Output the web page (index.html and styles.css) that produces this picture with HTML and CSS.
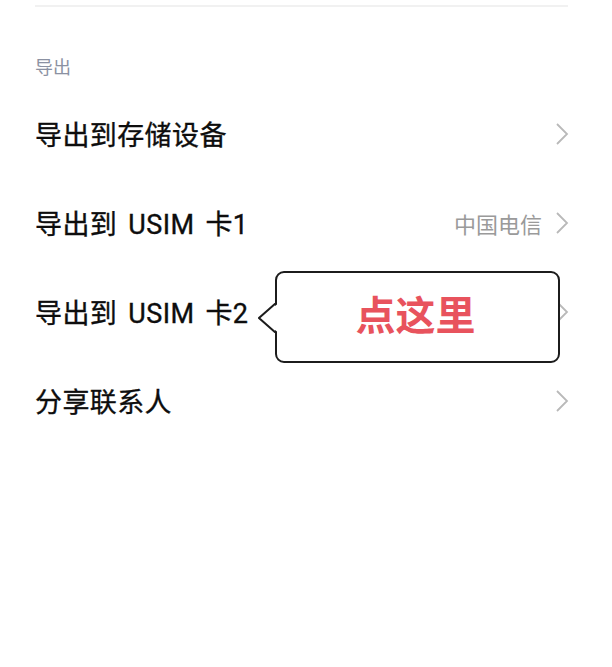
FILE: index.html
```html
<!DOCTYPE html>
<html lang="zh-CN">
<head>
<meta charset="utf-8">
<title>导出</title>
<link rel="stylesheet" href="styles.css">
</head>
<body>
<div class="page">
  <div class="divider"></div>
  <div class="section-label">导出</div>
  <div class="list">
    <div class="row">
      <span class="title">导出到存储设备</span>
      <span class="right">
        <svg class="chev" width="14" height="24" viewBox="0 0 14 24"><polyline points="2,2 12,12 2,22" fill="none" stroke="#b9b9b9" stroke-width="1.8"/></svg>
      </span>
    </div>
    <div class="row">
      <span class="title">导出到 USIM 卡1</span>
      <span class="right">
        <span class="value">中国电信</span>
        <svg class="chev" width="14" height="24" viewBox="0 0 14 24"><polyline points="2,2 12,12 2,22" fill="none" stroke="#b9b9b9" stroke-width="1.8"/></svg>
      </span>
    </div>
    <div class="row">
      <span class="title">导出到 USIM 卡2</span>
      <span class="right">
        <svg class="chev" width="14" height="24" viewBox="0 0 14 24"><polyline points="2,2 12,12 2,22" fill="none" stroke="#b9b9b9" stroke-width="1.8"/></svg>
      </span>
    </div>
    <div class="row">
      <span class="title">分享联系人</span>
      <span class="right">
        <svg class="chev" width="14" height="24" viewBox="0 0 14 24"><polyline points="2,2 12,12 2,22" fill="none" stroke="#b9b9b9" stroke-width="1.8"/></svg>
      </span>
    </div>
  </div>
  <div class="callout">
    <svg class="pointer" width="22" height="30" viewBox="0 0 22 30"><polygon points="21,0 1,15 21,30" fill="#fff"/><polyline points="18,0 1,15 18,30" fill="none" stroke="#1c1c1c" stroke-width="2"/></svg>
    <span class="callout-text">点这里</span>
  </div>
</div>
</body>
</html>
```

FILE: styles.css
```css
html, body {
  margin: 0;
  padding: 0;
  background: #ffffff;
}
body {
  font-family: "Noto Sans CJK SC", "Noto Sans", sans-serif;
}
.page {
  position: relative;
  width: 612px;
  height: 667px;
  padding: 5px 44px 0 35px;
  box-sizing: border-box;
}
.divider {
  height: 2px;
  background: #f1f1f1;
}
.section-label {
  margin-top: 47px;
  height: 24px;
  line-height: 24px;
  font-size: 18px;
  color: #8b91a2;
}
.list {
  margin-top: 11px;
  display: flex;
  flex-direction: column;
}
.row {
  height: 89px;
  display: flex;
  align-items: center;
  justify-content: space-between;
}
.title {
  font-family: "Roboto", "Noto Sans CJK SC", sans-serif;
  font-size: 27px;
  font-weight: 400;
  color: #0d0d0d;
  letter-spacing: 0.4px;
  word-spacing: 4px;
  -webkit-text-stroke: 0.35px #0d0d0d;
}
.right {
  display: flex;
  align-items: center;
  gap: 13px;
}
.value {
  font-size: 22px;
  color: #9a9a9a;
}
.chev {
  display: block;
  margin-right: -1px;
}
.callout {
  position: absolute;
  left: 275px;
  top: 271px;
  width: 285px;
  height: 92px;
  box-sizing: border-box;
  border: 2px solid #1c1c1c;
  border-radius: 9px;
  background: #ffffff;
  display: flex;
  align-items: center;
  justify-content: center;
}
.pointer {
  position: absolute;
  left: -19px;
  top: 30px;
}
.callout-text {
  font-size: 40px;
  font-weight: 700;
  color: #e8535d;
  margin-left: -4px;
  margin-top: -8px;
}
```
